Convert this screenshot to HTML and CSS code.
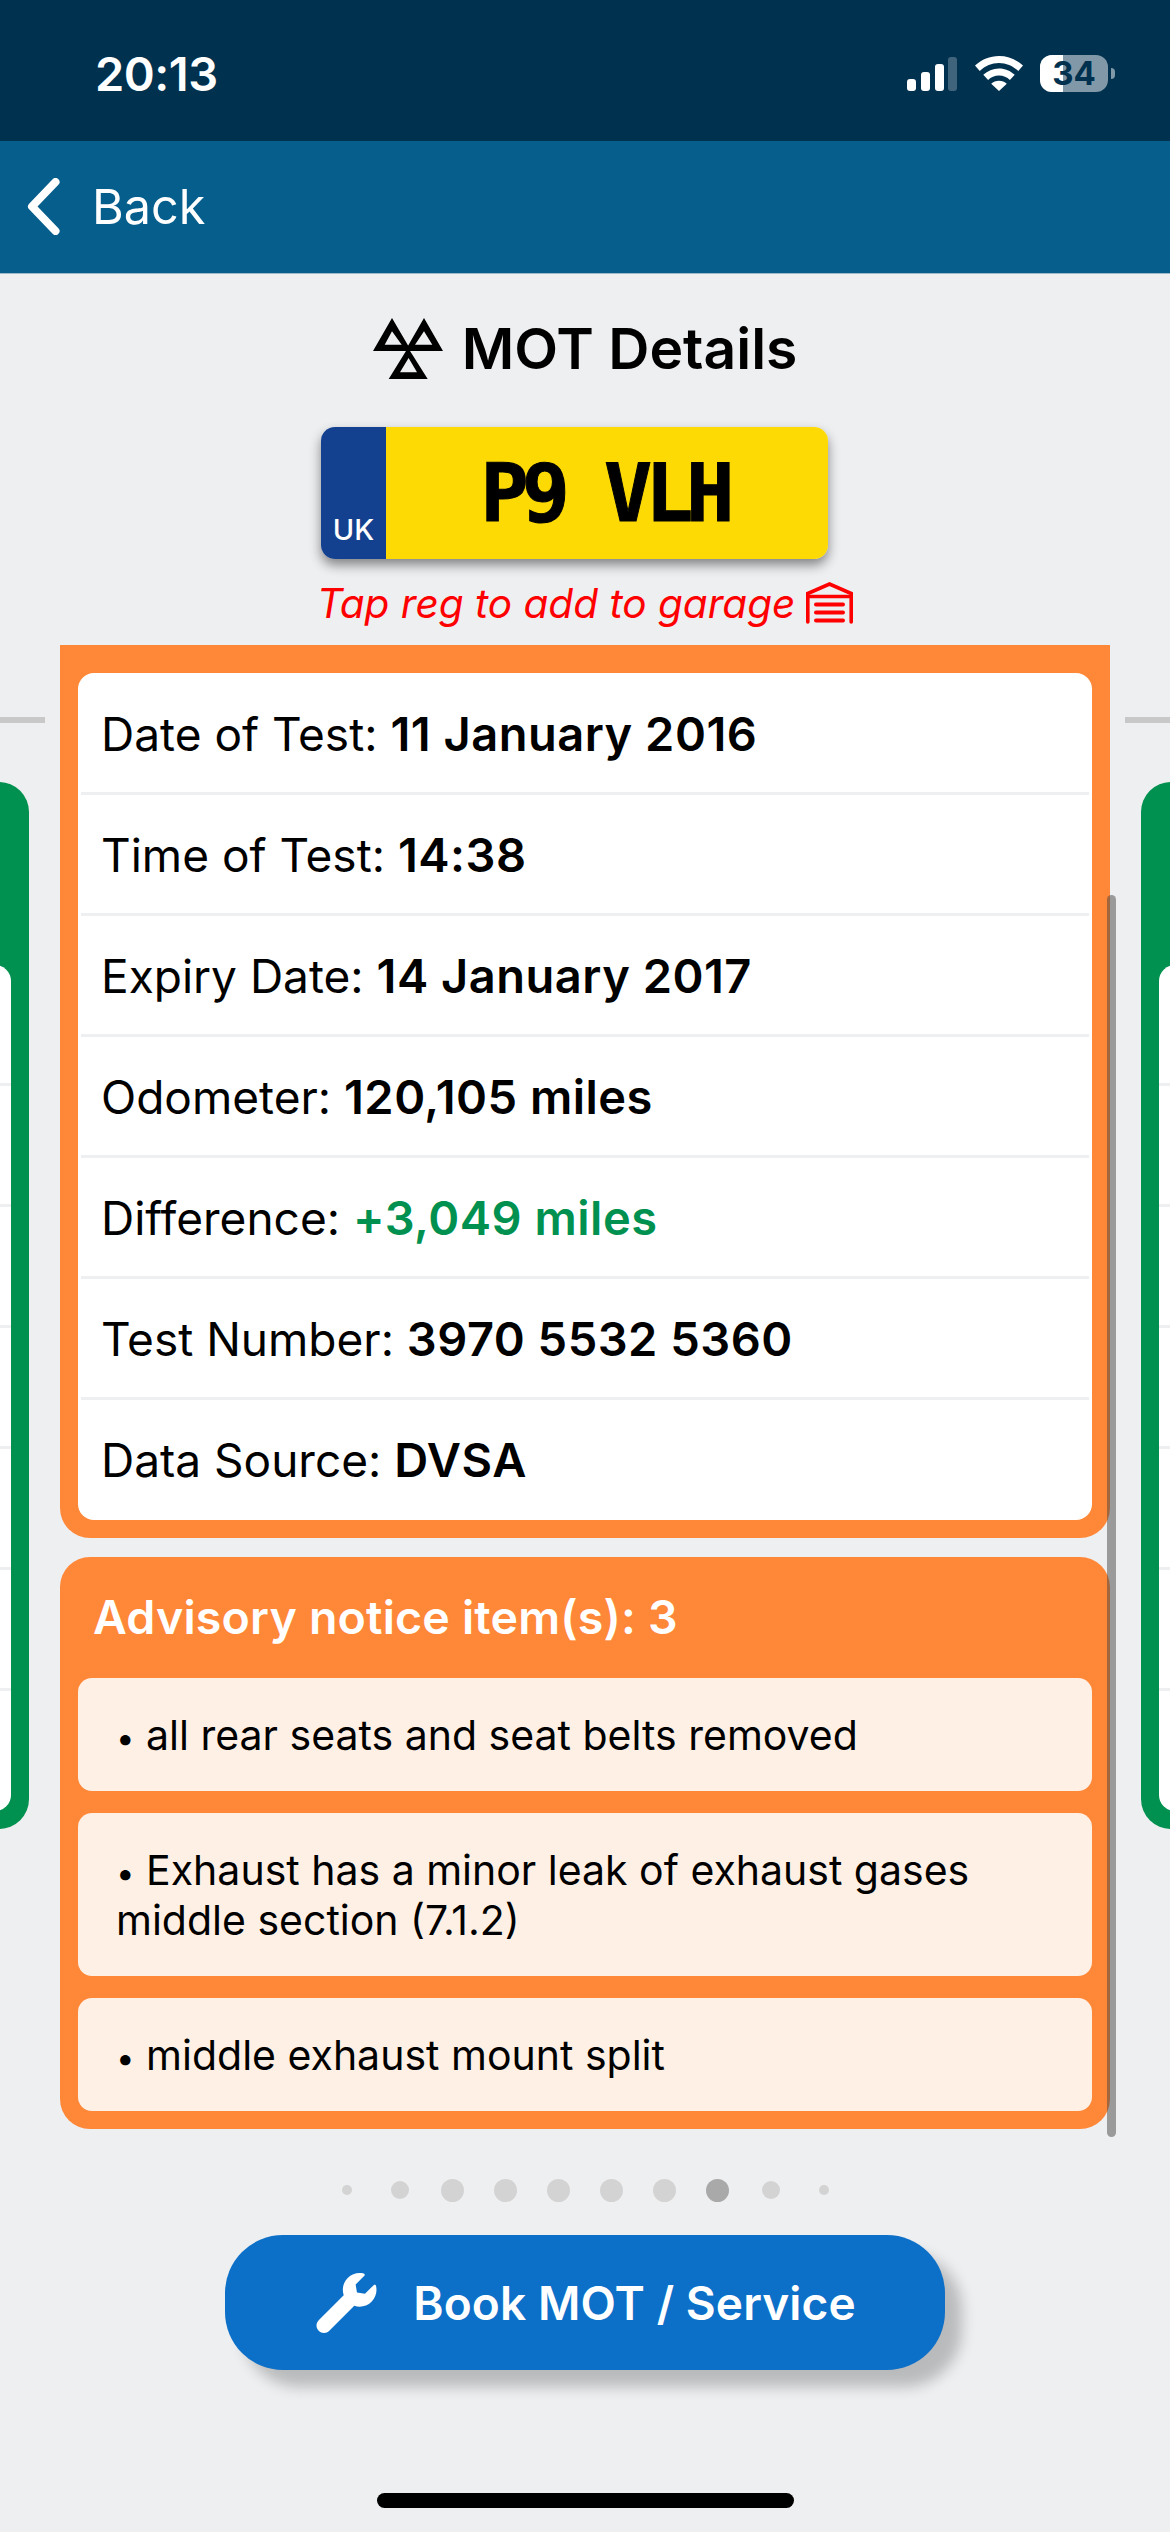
FILE: index.html
```html
<!DOCTYPE html>
<html lang="en">
<head>
<meta charset="utf-8">
<title>MOT Details</title>
<link rel="stylesheet" href="styles.css">
</head>
<body>
<div class="screen">
  <header class="status">
    <span class="time">20:13</span>
    <div class="status-icons">
      <div class="signal"><i class="b1"></i><i class="b2"></i><i class="b3"></i><i class="b4"></i></div>
      <svg class="wifi" viewBox="0 0 48 35"><path d="M24 0C14.800 0 6.700 3.400 0 9.600l4.700 5.300C10.200 9.800 16.700 6.900 24 6.900s13.800 2.900 19.300 8l4.700-5.300C41.300 3.400 33.200 0 24 0z"/><path d="M24 12.400c-6.100 0-11.500 2.300-15.700 6.300l4.800 5.300c2.900-2.700 6.600-4.400 10.900-4.400s8 1.700 10.900 4.400l4.800-5.300c-4.200-4-9.600-6.300-15.700-6.300z"/><path d="M24 24.700c-3 0-5.700 1.100-7.800 3.100L24 35l7.800-7.200c-2.100-2-4.800-3.100-7.800-3.100z"/></svg>
      <div class="battery"><div class="battery-body"><span class="battery-level"></span><span class="battery-text">34</span></div><span class="battery-nub"></span></div>
    </div>
  </header>
  <nav class="nav">
    <svg class="chevron" viewBox="0 0 33 57"><path d="M28.500 4 5 28.500 28.500 53"/></svg>
    <span class="back">Back</span>
  </nav>
  <main class="content">
    <h1 class="title">
      <svg class="mot-icon" viewBox="0 0 70 61"><path fill-rule="evenodd" d="M19 0 0 33h38.300zM19 13.300 11.700 26.700h17z"/><path fill-rule="evenodd" d="M51 0 70 33H32zM51 13.300 42 26.700h17.300z"/><path fill-rule="evenodd" d="M35 29.700 15.700 61h39zM35.600 40 27 54.300h17z"/></svg>
      <span>MOT Details</span>
    </h1>
    <div class="plate">
      <div class="plate-blue"><span>UK</span></div>
      <div class="plate-yellow"><span>P9 VLH</span></div>
    </div>
    <p class="tap">
      <span>Tap reg to add to garage</span>
      <svg class="garage" viewBox="0 0 47 42"><path d="M1.800 40V11.500L23.500 2l21.700 9.500V40" fill="none" stroke="#f00" stroke-width="3.600" stroke-linecap="round"/><path d="M1.800 14.500h43.400" stroke="#f00" stroke-width="3.600"/><rect x="8" y="20.500" width="31" height="4" rx="2"/><rect x="8" y="28.500" width="31" height="4" rx="2"/><rect x="8" y="36.500" width="31" height="4" rx="2"/></svg>
    </p>
    <div class="carousel">
      <section class="page side">
        <div class="page-line"></div>
        <div class="green-card">
          <div class="side-rows"><div></div><div></div><div></div><div></div><div></div><div></div><div></div></div>
        </div>
      </section>
      <section class="page main">
        <div class="card details">
          <div class="row">Date of Test: <b>11 January 2016</b></div>
          <div class="row">Time of Test: <b>14:38</b></div>
          <div class="row">Expiry Date: <b>14 January 2017</b></div>
          <div class="row">Odometer: <b>120,105 miles</b></div>
          <div class="row">Difference: <b class="green">+3,049 miles</b></div>
          <div class="row">Test Number: <b>3970 5532 5360</b></div>
          <div class="row">Data Source: <b>DVSA</b></div>
        </div>
        <div class="card advisory">
          <h2>Advisory notice item(s): 3</h2>
          <div class="item"><span class="bullet">•</span> all rear seats and seat belts removed</div>
          <div class="item"><span class="bullet">•</span> Exhaust has a minor leak of exhaust gases middle section (7.1.2)</div>
          <div class="item"><span class="bullet">•</span> middle exhaust mount split</div>
        </div>
        <div class="scrollbar"></div>
      </section>
      <section class="page side">
        <div class="page-line"></div>
        <div class="green-card">
          <div class="side-rows"><div></div><div></div><div></div><div></div><div></div><div></div><div></div></div>
        </div>
      </section>
    </div>
    <div class="dots">
      <i class="tiny"></i><i class="small"></i><i></i><i></i><i></i><i></i><i></i><i class="active"></i><i class="small"></i><i class="tiny"></i>
    </div>
    <div class="button-wrap">
      <button class="book">
        <svg class="wrench" viewBox="0 0 512 512"><path d="M507.730 109.100c-2.240-9.030-13.540-12.090-20.120-5.510l-74.360 74.360-67.880-11.310-11.310-67.880 74.360-74.360c6.620-6.620 3.430-17.900-5.660-20.160-47.380-11.740-99.550.91-136.580 37.930-39.640 39.640-50.550 97.100-34.050 147.200L18.740 402.760c-24.990 24.990-24.990 65.510 0 90.500 24.990 24.990 65.510 24.990 90.500 0l213.210-213.210c50.120 16.710 107.470 5.680 147.370-34.220 37.070-37.070 49.700-89.320 37.910-136.730z"/></svg>
        <span>Book MOT / Service</span>
      </button>
    </div>
    <div class="home"></div>
  </main>
</div>
</body>
</html>
```
FILE: styles.css
```css
* { box-sizing: border-box; }
html, body { margin: 0; padding: 0; }
body { background: #eeeff1; font-family: Inter, "Noto Sans", sans-serif; color: #000; }
.screen { width: 1170px; height: 2532px; overflow: hidden; display: flex; flex-direction: column; }

.status { height: 141px; flex: none; background: #00314f; display: flex; align-items: flex-start; justify-content: space-between; padding: 0 55px 0 95px; color: #fff; }
.time { font-size: 47px; font-weight: 600; line-height: 56px; margin-top: 46px; letter-spacing: -0.5px; }
.status-icons { display: flex; align-items: flex-start; margin-top: 55px; }
.signal { display: flex; align-items: flex-end; gap: 4.800px; width: 51px; height: 36px; margin-right: 17px; }
.signal i { display: block; width: 9px; background: #fff; border-radius: 3px; }
.signal .b1 { height: 12px; }
.signal .b2 { height: 19px; }
.signal .b3 { height: 27px; }
.signal .b4 { height: 34px; background: rgba(255,255,255,.25); }
.wifi { width: 48px; height: 35px; fill: #fff; margin-right: 17px; margin-top: 1px; }
.battery { display: flex; align-items: center; height: 37px; }
.battery-body { position: relative; width: 68px; height: 37px; border-radius: 12px; background: rgba(255,255,255,.5); display: flex; align-items: center; justify-content: center; }
.battery-level { position: absolute; left: 0; top: 0; bottom: 0; width: 23px; background: #fff; border-radius: 12px 0 0 12px; }
.battery-text { position: relative; font-size: 33px; font-weight: 700; color: #00314f; line-height: 1; }
.battery-nub { width: 4px; height: 11px; margin-left: 3px; background: rgba(255,255,255,.5); border-radius: 0 4px 4px 0; }

.nav { height: 133px; flex: none; background: #055e8c; border-bottom: 1px solid #9fb9c9; display: flex; align-items: center; color: #fff; padding: 0 0 4px 27px; }
.chevron { width: 33px; height: 57px; fill: none; stroke: #fff; stroke-width: 8; stroke-linecap: round; stroke-linejoin: round; margin-top: 2px; }
.back { font-size: 48.500px; font-weight: 400; margin-left: 32px; line-height: 60px; margin-top: 3px; }

.content { flex: 1; display: flex; flex-direction: column; min-height: 0; }
.title { margin: 44px 0 0; height: 61px; display: flex; align-items: center; justify-content: center; font-size: 57px; font-weight: 600; line-height: 61px; gap: 19px; }
.mot-icon { width: 70px; height: 61px; }

.plate { margin: 48px 0 0 321px; width: 507px; height: 132px; display: flex; border-radius: 14px; overflow: hidden; box-shadow: 0 6px 12px rgba(0,0,0,.45); flex: none; }
.plate-blue { width: 65px; background: #13418f; color: #fff; display: flex; align-items: flex-end; justify-content: center; font-size: 29px; font-weight: 500; padding-bottom: 12px; line-height: 35px; }
.plate-yellow { flex: 1; background: #fdda04; display: flex; align-items: center; justify-content: center; font-family: "DejaVu Sans Mono", monospace; font-weight: 700; font-size: 80px; padding-right: 6px; -webkit-text-stroke: 1px #000; }
.plate-yellow span { letter-spacing: -7px; }

.tap { margin: 19px 0 0; height: 50px; display: flex; align-items: center; justify-content: center; color: #f00; font-size: 40.500px; font-style: italic; gap: 11px; fill: #f00; }
.garage { width: 47px; height: 42px; }

.carousel { display: flex; justify-content: center; align-items: flex-start; gap: 31px; margin-top: 17px; height: 1533px; flex: none; }
.page { flex: none; width: 1050px; }
.main { position: relative; display: flex; flex-direction: column; gap: 19px; }
.side { padding-top: 72px; }
.page-line { height: 6px; margin: 0 -16px; background: #c8c8c8; }
.green-card { margin-top: 59px; height: 1047px; background: #009150; border-radius: 30px; padding: 183px 18px 18px; }
.side-rows { background: #fff; border-radius: 16px; height: 846px; display: flex; flex-direction: column; }
.side-rows div { height: 121px; border-bottom: 3px solid #eeeff1; flex: none; }
.side-rows div:last-child { border-bottom: 0; }

.card { background: #ff8738; padding: 18px; }
.details { border-radius: 0 0 30px 30px; height: 893px; padding-top: 28px; }
.row { height: 121px; background: #fff; font-size: 46px; line-height: 121px; padding: 0 23px; position: relative; }
.row:first-child { border-radius: 16px 16px 0 0; }
.row:last-child { border-radius: 0 0 16px 16px; }
.row:not(:last-child)::after { content: ""; position: absolute; left: 3px; right: 3px; bottom: -1px; height: 3px; background: #eeeff1; z-index: 1; }
.row b { font-weight: 600; font-size: 47px; letter-spacing: .5px; }
.green { color: #009150; }

.advisory { border-radius: 30px; height: 572px; display: flex; flex-direction: column; gap: 22px; }
.advisory h2 { margin: 0; height: 99px; margin-bottom: -18px; padding: 10px 0 0 15px; color: #fff; font-size: 46.500px; font-weight: 600; line-height: 64px; letter-spacing: .2px; }
.item { background: #fff0e5; border-radius: 14px; font-size: 41px; line-height: 50px; padding: 32px 38px 31px 38px; }
.bullet { font-size: 33px; line-height: 0; }

.scrollbar { position: absolute; top: 250px; bottom: -8px; right: -6px; width: 9px; border-radius: 5px; background: rgba(70,70,70,.5); }

.dots { height: 24px; display: flex; align-items: center; justify-content: center; }
.dots i { display: block; width: 23px; height: 23px; border-radius: 50%; background: #d3d3d3; margin: 0 15px; }
.dots .small { width: 18px; height: 18px; margin: 0 17.500px; }
.dots .tiny { width: 10px; height: 10px; margin: 0 21.500px; }
.dots .active { background: #a9a9a9; }

.button-wrap { display: flex; justify-content: center; margin-top: 33px; }
.book { width: 720px; height: 135px; border: 0; border-radius: 58px; background: #0c6fc8; color: #fff; font-family: inherit; font-size: 46px; font-weight: 600; letter-spacing: .1px; display: flex; align-items: center; justify-content: center; gap: 36px; padding: 0 0 0 2px; box-shadow: 17px 17px 14px rgba(0,0,0,.22); }
.wrench { width: 61px; height: 60px; fill: #fff; }

.home { width: 417px; height: 15px; background: #000; border-radius: 8px; margin: 123px auto 0; }
```
